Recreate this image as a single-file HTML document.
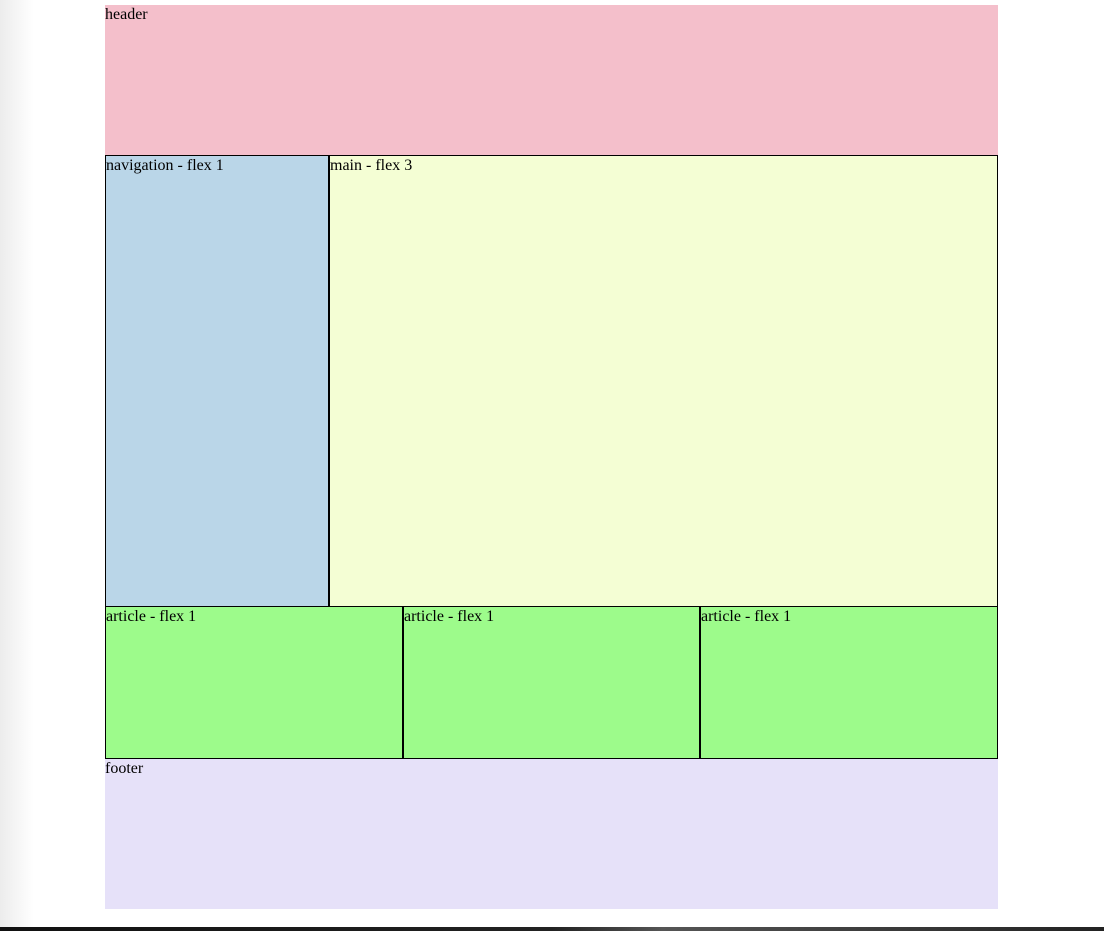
<!DOCTYPE html>
<html><head><style>
body{margin:0;width:1104px;height:931px;background:#fff;position:relative;overflow:hidden;font-family:"Liberation Serif",serif;font-size:16px;color:#000}
.b{position:absolute;box-sizing:border-box;line-height:18px;padding-top:1px}
.k{border:1px solid #000;padding-top:1px}
</style></head><body>
<div style="position:absolute;left:0;top:0;width:34px;height:927px;background:linear-gradient(to right,#ececec,#fff)"></div>
<div class="b" style="left:105px;top:5px;width:893px;height:150px;background:#f4bfcb">header</div>
<div class="b k" style="left:105px;top:155px;width:225px;height:452px;background:#bad6e8">navigation - flex 1</div>
<div class="b k" style="left:328px;top:155px;width:670px;height:452px;background:#f4fed4;border-left-width:2px">main - flex 3</div>
<div class="b k" style="left:105px;top:606px;width:299px;height:153px;background:#9dfb8b">article - flex 1</div>
<div class="b k" style="left:402px;top:606px;width:299px;height:153px;background:#9dfb8b;border-left-width:2px">article - flex 1</div>
<div class="b k" style="left:699px;top:606px;width:299px;height:153px;background:#9dfb8b;border-left-width:2px">article - flex 1</div>
<div class="b" style="left:105px;top:759px;width:893px;height:150px;background:#e6e1f9">footer</div>
<div style="position:absolute;left:0;top:927px;width:1104px;height:4px;background:linear-gradient(to right,#111,#222 50%,#555 60%,#222)"></div>
</body></html>
